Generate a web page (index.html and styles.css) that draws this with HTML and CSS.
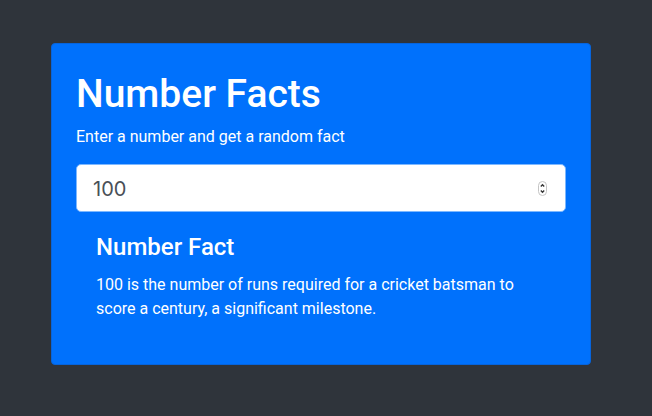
FILE: index.html
```html
<!DOCTYPE html>
<html lang="en">
<head>
<meta charset="utf-8">
<meta name="viewport" content="width=device-width, initial-scale=1">
<title>Number Facts</title>
<link rel="stylesheet" href="styles.css">
</head>
<body>
<main class="panel">
  <h1 class="panel-title">Number Facts</h1>
  <p class="panel-lead"><label for="number">Enter a number and get a random fact</label></p>
  <div class="field">
    <input class="field-input" id="number" type="number" value="100">
    <svg class="field-stepper" width="9" height="15" viewBox="0 0 9 15" fill="none" aria-hidden="true">
      <rect x=".5" y=".5" width="8" height="14" rx="4" fill="#fff" stroke="#c4c4c4"/>
      <path d="M2.8 5.5 4.5 3.7l1.7 1.8M2.8 9.5l1.7 1.8 1.7-1.8" stroke="#333" stroke-width="1.3"/>
    </svg>
  </div>
  <section class="fact">
    <h2 class="fact-title">Number Fact</h2>
    <p class="fact-text">100 is the number of runs required for a cricket batsman to score a century, a significant milestone.</p>
  </section>
</main>
</body>
</html>
```
FILE: styles.css
```css
* {
  box-sizing: border-box;
}

body {
  margin: 0;
  padding: 43px 61px 43px 51px;
  background: #2f343b;
  color: #fff;
  font: 450 16px/24px Roboto, "Liberation Sans", sans-serif;
}

h1,
h2,
p {
  margin: 0;
}

.panel {
  max-width: 720px;
  padding: 24px;
  border: 1px solid #0664dc;
  border-radius: 4px;
  background: #0071fc;
}

.panel-title {
  margin-bottom: 5px;
  font-size: 39px;
  font-weight: 500;
  line-height: 52px;
}

.panel-lead {
  margin-bottom: 15px;
}

.field {
  position: relative;
}

.field-input {
  display: block;
  width: 100%;
  height: 48px;
  padding: 10px 16px 8px;
  border: 1px solid #7db8ff;
  border-radius: 5px;
  background: #fff;
  color: #495057;
  font: 400 20px/28px Inter, "Liberation Sans", sans-serif;
  appearance: textfield;
}

.field-input::-webkit-inner-spin-button {
  appearance: none;
  margin: 0;
}

.field-stepper {
  position: absolute;
  top: 17px;
  right: 19px;
  pointer-events: none;
}

.fact {
  padding: 20px 20px 19px;
}

.fact-title {
  margin-bottom: 11px;
  font-size: 24px;
  font-weight: 500;
  line-height: 30px;
}
```
